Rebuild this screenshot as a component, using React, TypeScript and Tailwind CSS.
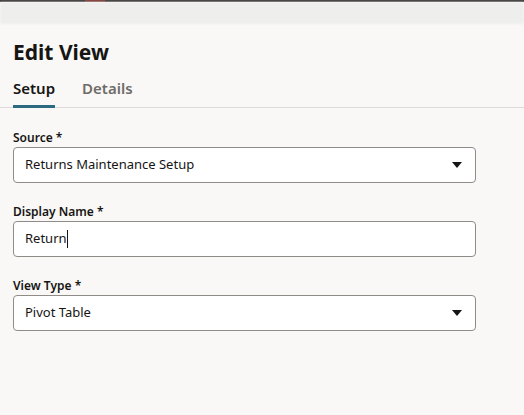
import React, { useState } from 'react';

type FieldProps = {
  label: string;
  children: React.ReactNode;
};

const Field: React.FC<FieldProps> = ({ label, children }) => (
  <div className="flex flex-col">
    <label className="text-[12px] font-semibold leading-[16px] text-[#161513] mb-px">{label}</label>
    {children}
  </div>
);

const Caret = () => (
  <svg width="10" height="6" viewBox="0 0 10 6" className="shrink-0">
    <path d="M0 0h10L5 6z" fill="#161513" />
  </svg>
);

const SelectBox: React.FC<{ value: string }> = ({ value }) => (
  <div className="h-[36px] w-[463px] flex items-center justify-between bg-white border border-[#8f8c88] rounded-[4px] pl-[11px] pr-[13px]">
    <span className="text-[13px] text-[#161513]">{value}</span>
    <Caret />
  </div>
);

const App: React.FC = () => {
  const [activeTab, setActiveTab] = useState<'setup' | 'details'>('setup');

  return (
    <div
      className="w-[524px] h-[415px] bg-[#f9f8f6] flex flex-col overflow-hidden"
      style={{ fontFamily: '"Noto Sans", "Open Sans", sans-serif' }}
    >
      {/* app chrome strip */}
      <div className="h-[2px] bg-[#3a3836] flex">
        <div className="w-[85px]" />
        <div className="w-[20px] bg-[#7a3b36]" />
      </div>
      <div className="h-[22px] bg-[#eeeeed] blur-[1px]" />

      <h1 className="mt-[14px] px-[13px] text-[21px] font-bold leading-[28px] text-[#161513]">Edit View</h1>

      <nav className="mt-[12px] flex border-b border-[#dddbd8] px-[13px] gap-[27px]">
        <button
          onClick={() => setActiveTab('setup')}
          className={`${
            activeTab === 'setup' ? 'border-[#2b6a80] text-[#161513]' : 'border-transparent text-[#6f6c69]'
          } pb-[6px] border-b-[3px] -mb-px text-[15px] font-semibold leading-[21px]`}
        >
          Setup
        </button>
        <button
          onClick={() => setActiveTab('details')}
          className={`${
            activeTab === 'details' ? 'border-[#2b6a80] text-[#161513]' : 'border-transparent text-[#6f6c69]'
          } pb-[6px] border-b-[3px] -mb-px text-[15px] font-semibold leading-[21px]`}
        >
          Details
        </button>
      </nav>

      <div className="px-[13px] pt-[22px] flex flex-col gap-[21px]">
        <Field label="Source *">
          <SelectBox value="Returns Maintenance Setup" />
        </Field>
        <Field label="Display Name *">
          <div className="h-[36px] w-[463px] flex items-center bg-white border border-[#8f8c88] rounded-[4px] px-[11px] text-[13px] text-[#161513]">
            Return
            <span className="inline-block w-px h-[18px] bg-[#161513]" />
          </div>
        </Field>
        <Field label="View Type *">
          <SelectBox value="Pivot Table" />
        </Field>
      </div>
    </div>
  );
};

export default App;
